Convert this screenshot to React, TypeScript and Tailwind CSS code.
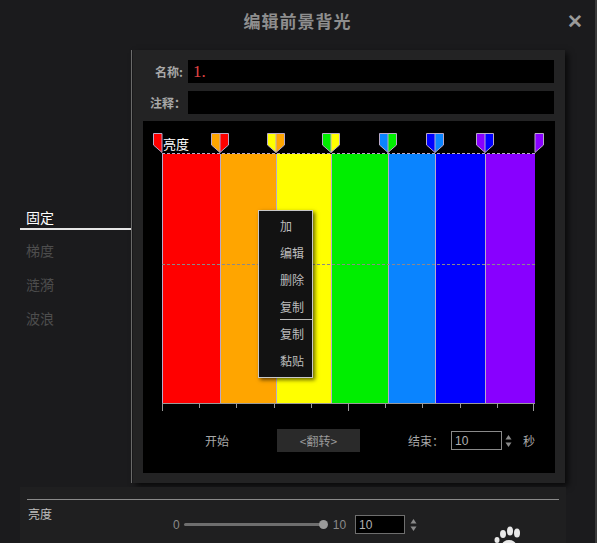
import React from 'react';

const font = '"Noto Sans CJK SC", "Liberation Sans", sans-serif';

const segments = [
  { w: 58, c: '#ff0000' },
  { w: 56, c: '#ffa500' },
  { w: 55, c: '#ffff00' },
  { w: 57, c: '#00ee00' },
  { w: 47, c: '#0a84ff' },
  { w: 50, c: '#0000ff' },
  { w: 50, c: '#8800ff' },
];

// markers: x relative to bar left, left-half colour, right-half colour
const markers = [
  { x: 58, l: '#ffa500', r: '#ff0000' },
  { x: 114, l: '#ffff00', r: '#ffa500' },
  { x: 169, l: '#00ee00', r: '#ffff00' },
  { x: 226, l: '#0a84ff', r: '#00ee00' },
  { x: 273, l: '#0000ff', r: '#0a84ff' },
  { x: 323, l: '#8800ff', r: '#0000ff' },
];

function Marker({ l, r }: { l: string; r: string }) {
  return (
    <svg width="18" height="20" viewBox="0 0 18 20">
      <polygon points="0.5,0.5 9,0.5 9,19.5 0.5,12" fill={l} />
      <polygon points="9,0.5 17.5,0.5 17.5,12 9,19.5" fill={r} />
      <path d="M0.5 0.5 H17.5 V12 L9 19.5 L0.5 12 Z M9 0.5 V19.5" fill="none" stroke="#b9a9c9" strokeWidth="1" />
    </svg>
  );
}

function Spinner() {
  return (
    <svg width="7" height="14" viewBox="0 0 7 14">
      <polygon points="3.5,1 6.5,5.5 0.5,5.5" fill="#8a8a8a" />
      <polygon points="0.5,8.5 6.5,8.5 3.5,13" fill="#8a8a8a" />
    </svg>
  );
}

function GradientEditor() {
  const ticks = Array.from({ length: 11 }, (_, i) => i);
  return (
    <div className="relative w-[373px] ml-[19px]">
      {/* marker row */}
      <div className="relative h-[20px]">
        <svg width="10" height="20" viewBox="0 0 10 20" className="absolute left-[-9px] top-0">
          <polygon points="0.5,0.5 9,0.5 9,19.5 0.5,12" fill="#ff0000" stroke="#b9a9c9" strokeWidth="1" />
        </svg>
        {markers.map((m, i) => (
          <div key={i} className="absolute top-0" style={{ left: m.x - 9 }}>
            <Marker l={m.l} r={m.r} />
          </div>
        ))}
        <svg width="10" height="20" viewBox="0 0 10 20" className="absolute right-[-9px] top-0">
          <polygon points="1,0.5 9.5,0.5 9.5,12 1,19.5" fill="#8800ff" stroke="#b9a9c9" strokeWidth="1" />
        </svg>
        <span className="absolute left-[1px] top-[4px] text-[13px] leading-none text-white">亮度</span>
      </div>

      {/* colour bar */}
      <div className="relative flex h-[250px] border-t border-dashed border-[#b9a9c9]">
        {segments.map((s, i) => (
          <div
            key={i}
            className="h-full border-l border-[#b9a9c9] last:border-r"
            style={{ width: s.w, backgroundColor: s.c }}
          />
        ))}
        <div className="absolute left-0 right-0 top-[110px] border-t border-dashed border-[#8a8a8a]" />

        {/* context menu */}
        <div className="absolute left-[96px] top-[56px] w-[55px] h-[168px] bg-[#121212] border border-[#c8c8c8] shadow-[2px_2px_4px_rgba(0,0,0,0.6)] text-[12px] text-[#bdbdbd]">
          <div className="pl-[21px] pt-[6px] flex flex-col">
            <span className="h-[27px] leading-[18px]">加</span>
            <span className="h-[27px] leading-[18px]">编辑</span>
            <span className="h-[27px] leading-[18px]">删除</span>
            <span className="h-[21px] leading-[18px]">复制</span>
            <div className="border-t border-[#bdbdbd] mb-[5px]" />
            <span className="h-[27px] leading-[18px]">复制</span>
            <span className="h-[27px] leading-[18px]">黏贴</span>
          </div>
        </div>
      </div>

      {/* axis */}
      <div className="relative h-[10px] border-t border-[#9a9a9a]">
        {ticks.map((i) => (
          <div
            key={i}
            className={`absolute top-0 w-px bg-[#9a9a9a] ${i === 0 || i === 10 || i === 5 ? 'h-[7px]' : 'h-[4px]'}`}
            style={{ left: Math.round(i * 37.2) - (i === 10 ? 1 : 0) }}
          />
        ))}
      </div>
    </div>
  );
}

export default function App() {
  return (
    <div
      className="w-[597px] h-[543px] overflow-hidden bg-[#1b1b1d] flex flex-col border-r-2 border-[#3a3a3a]"
      style={{ fontFamily: font }}
    >
      {/* header */}
      <div className="relative h-[42px] flex items-center justify-center">
        <h1 className="text-[17px] font-bold text-[#8e8e8e] tracking-[1px]">编辑前景背光</h1>
        <span className="absolute right-[12px] top-[6px] text-[19px] font-bold text-[#9a9a9a]">✕</span>
      </div>

      <div className="flex mt-[8px] h-[433px]">
        {/* sidebar */}
        <div className="w-[132px] border-r border-[#707070] pt-[154px] flex flex-col">
          <div className="ml-[20px] border-b-2 border-[#e6e6e6]">
            <span className="ml-[6px] text-[14px] text-white">固定</span>
          </div>
          <span className="ml-[26px] mt-[10px] text-[14px] text-[#4d4d4d]">梯度</span>
          <span className="ml-[26px] mt-[13px] text-[14px] text-[#4d4d4d]">涟漪</span>
          <span className="ml-[26px] mt-[13px] text-[14px] text-[#4d4d4d]">波浪</span>
        </div>

        {/* main panel */}
        <div className="w-[432px] ml-[1px] bg-[#232324] shadow-[3px_3px_6px_rgba(0,0,0,0.7)] pt-[10px] flex flex-col">
          <div className="flex items-center h-[23px]">
            <span className="w-[55px] pr-[5px] text-right text-[12px] font-bold text-[#a8a8a8]">名称:</span>
            <div className="w-[366px] h-full bg-black flex items-center pl-[5px]">
              <span className="text-[17px] text-[#e04444]" style={{ fontFamily: '"Liberation Serif", serif' }}>1.</span>
            </div>
          </div>
          <div className="flex items-center h-[23px] mt-[8px]">
            <span className="w-[55px] pr-[2px] text-right text-[12px] font-bold text-[#a8a8a8] whitespace-nowrap">注释：</span>
            <div className="w-[366px] h-full bg-black" />
          </div>

          {/* canvas */}
          <div className="mt-[7px] ml-[10px] w-[412px] h-[352px] bg-black pt-[12px] flex flex-col">
            <GradientEditor />
            <div className="flex items-center h-[23px] mt-[16px] text-[12px] text-[#a8a8a8] whitespace-nowrap">
              <span className="ml-[62px]">开始</span>
              <div className="ml-[48px] w-[83px] h-[23px] bg-[#2a2a2a] flex items-center justify-center text-[#9a9a9a]">&lt;翻转&gt;</div>
              <span className="ml-[48px] shrink-0">结束：</span>
              <div className="ml-[7px] w-[51px] h-[19px] shrink-0 border border-[#8a8a8a] flex items-center pl-[3px] text-[12px] text-[#b0b0b0]" style={{ fontFamily: '"Liberation Sans", sans-serif' }}>10</div>
              <div className="ml-[3px] flex shrink-0"><Spinner /></div>
              <span className="ml-[11px] shrink-0">秒</span>
            </div>
          </div>
        </div>
      </div>

      {/* bottom panel */}
      <div className="mt-[4px] ml-[20px] w-[546px] flex-1 bg-[#1f1f20] pt-[12px] px-[7px]">
        <div className="border-t border-[#8a8a8a]" />
        <div className="relative flex">
          <span className="ml-[1px] mt-[5px] text-[12px] text-[#bdbdbd]">亮度</span>
          <div className="ml-[121px] mt-[15px] flex items-center text-[12px] text-[#8a8a8a]" style={{ fontFamily: '"Liberation Sans", sans-serif' }}>
            <span>0</span>
            <div className="relative ml-[4px] w-[140px] h-[3px] bg-[#6e6e6e] rounded">
              <div className="absolute right-[-4px] top-[-3px] w-[9px] h-[9px] rounded-full bg-[#9a9a9a]" />
            </div>
            <span className="ml-[9px]">10</span>
            <div className="ml-[9px] w-[50px] h-[19px] bg-black border border-[#6e6e6e] flex items-center pl-[3px] text-[#b0b0b0]">10</div>
            <div className="ml-[5px] flex"><Spinner /></div>
          </div>
          {/* paw watermark */}
          <svg width="32" height="24" viewBox="0 0 32 24" className="absolute left-[465px] top-[23px]">
            <ellipse cx="11" cy="11" rx="3" ry="4" fill="#e8e8e8" />
            <ellipse cx="18" cy="8" rx="3" ry="4.5" fill="#e8e8e8" />
            <ellipse cx="25" cy="10" rx="3" ry="4.5" fill="#e8e8e8" />
            <ellipse cx="5" cy="17" rx="2.5" ry="3" fill="#e8e8e8" />
            <ellipse cx="17" cy="22" rx="7" ry="5" fill="#e8e8e8" />
          </svg>
        </div>
      </div>
    </div>
  );
}
